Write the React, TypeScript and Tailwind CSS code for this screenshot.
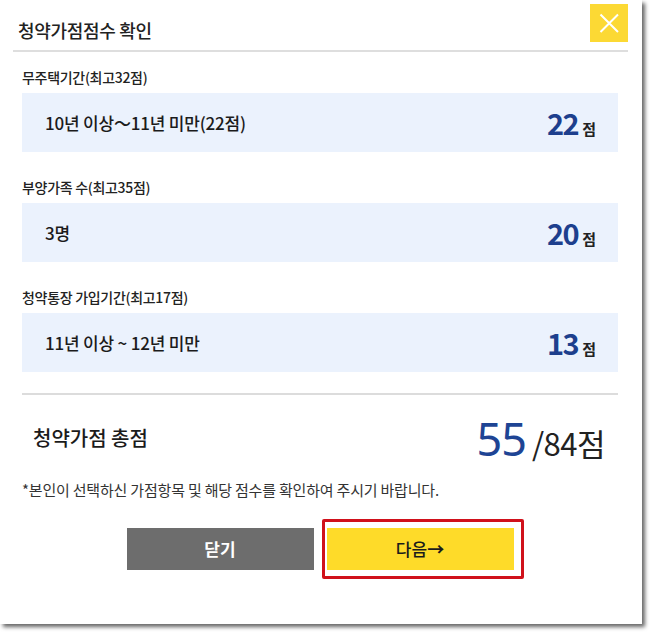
import React from "react";

const KR = { fontFamily: '"Noto Sans CJK KR", "Noto Sans", sans-serif' };

function Row({ label, value, score }: { label: string; value: string; score: string }) {
  return (
    <div>
      <div className="h-[20px] leading-[20px] text-[14px] font-medium text-[#222] tracking-[-0.3px]">{label}</div>
      <div className="mt-[6px] h-[59px] bg-[#ebf2fd] flex items-center justify-between pl-[23px] pr-[22px]">
        <span className="text-[17px] font-medium text-[#1b1b1b] tracking-[-0.2px]">{value}</span>
        <span className="flex items-baseline">
          <span className="text-[29px] font-bold text-[#1d3f8d] tracking-[-1.5px] leading-none">{score}</span>
          <span className="ml-[4px] text-[15px] font-bold text-[#222] leading-none">점</span>
        </span>
      </div>
    </div>
  );
}

export default function App() {
  return (
    <div className="w-[650px] h-[632px] bg-white" style={KR}>
      <div className="w-[642px] h-[624px] bg-white shadow-[3px_3px_4px_rgba(0,0,0,0.6)] flex flex-col">
        <div className="ml-[13px] w-[615px] h-[52px] border-b-2 border-[#dedede] flex justify-between">
          <div className="pl-[5px] pt-[18px] text-[18px] leading-[24px] font-medium text-[#222] tracking-[-0.3px]">
            청약가점점수 확인
          </div>
          <button className="mt-[4px] w-[38px] h-[38px] bg-[#fcd934] flex items-center justify-center">
            <svg width="38" height="38" viewBox="0 0 38 38">
              <path d="M10.5 10.5 L28 28 M28 10.5 L10.5 28" stroke="#fff" strokeWidth="2" fill="none" />
            </svg>
          </button>
        </div>

        <div className="pl-[22px] pr-[24px]">
          <div className="mt-[15px] flex flex-col gap-[25px]">
            <Row label="무주택기간(최고32점)" value="10년 이상～11년 미만(22점)" score="22" />
            <Row label="부양가족 수(최고35점)" value="3명" score="20" />
            <Row label="청약통장 가입기간(최고17점)" value="11년 이상 ~ 12년 미만" score="13" />
          </div>

          <div className="mt-[21px] h-[2px] bg-[#dcdcdc]" />

          <div className="mt-[18px] h-[50px] flex items-center justify-between pl-[11px] pr-[13px]">
            <span className="text-[20px] font-medium text-[#1b1b1b]">청약가점 총점</span>
            <span className="flex items-baseline">
              <span className="text-[45px] font-normal text-[#1e4494] leading-none tracking-[-1px]" style={{ fontFamily: '"Noto Sans", sans-serif' }}>55</span>
              <span className="ml-[6px] text-[31px] font-normal text-[#222] leading-none tracking-[-0.5px]">/84점</span>
            </span>
          </div>

          <div className="mt-[17px] text-[15px] leading-[20px] text-[#333] tracking-[-0.2px]">
            *본인이 선택하신 가점항목 및 해당 점수를 확인하여 주시기 바랍니다.
          </div>

          <div className="mt-[28px] flex justify-center gap-[13px]">
            <button className="w-[187px] h-[42px] bg-[#6d6d6d] text-white text-[17px] font-bold">닫기</button>
            <div className="relative">
              <button className="w-[187px] h-[42px] bg-[#fedb29] text-[#1b1b1b] text-[17px] font-medium">
                다음<span className="font-bold">→</span>
              </button>
              <div className="absolute -left-[5px] -top-[9px] -right-[10px] -bottom-[9px] border-[3px] border-[#d0111b] rounded-[2px] pointer-events-none" />
            </div>
          </div>
        </div>
      </div>
    </div>
  );
}
